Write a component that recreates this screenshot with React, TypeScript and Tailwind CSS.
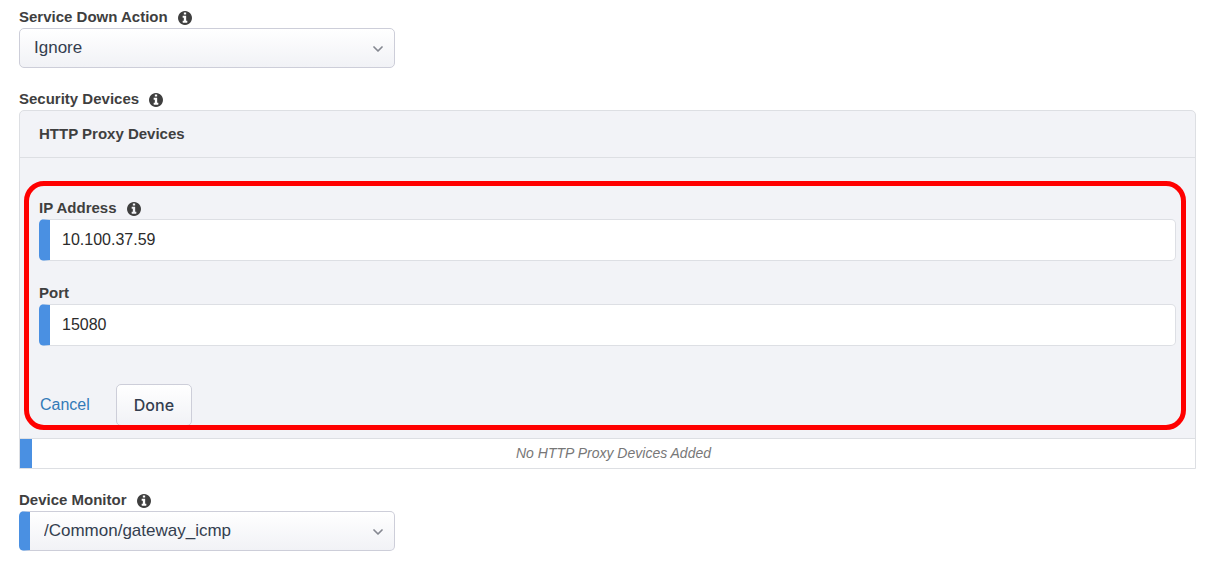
import { useState, type ReactNode } from "react";

function InfoIcon() {
  return (
    <svg viewBox="0 128 1536 1536" aria-hidden="true" className="size-3.5 text-[#3f3f3f]" fill="currentColor">
      <path d="M1024 1376v-160q0-14-9-23t-23-9h-96v-512q0-14-9-23t-23-9h-320q-14 0-23 9t-9 23v160q0 14 9 23t23 9h96v320h-96q-14 0-23 9t-9 23v160q0 14 9 23t23 9h448q14 0 23-9t9-23zm-128-896v-160q0-14-9-23t-23-9h-192q-14 0-23 9t-9 23v160q0 14 9 23t23 9h192q14 0 23-9t9-23zm640 416q0 209-103 385.5t-279.5 279.5-385.5 103-385.5-103-279.5-279.5-103-385.5 103-385.5 279.5-279.5 385.5-103 385.5 103 279.5 279.5 103 385.5z" />
    </svg>
  );
}

type LabelProps = { htmlFor?: string; id?: string; info?: boolean; children: ReactNode };

function FieldLabel({ htmlFor, id, info, children }: LabelProps) {
  const text = "text-[15px] font-bold text-[#3f3f3f]";
  return (
    <div className="flex h-[21px] items-center gap-2.5">
      {htmlFor ? (
        <label htmlFor={htmlFor} className={text}>{children}</label>
      ) : (
        <span id={id} className={text}>{children}</span>
      )}
      {info && <InfoIcon />}
    </div>
  );
}

type SelectProps = { id: string; options: string[]; required?: boolean };

function SelectBox({ id, options, required }: SelectProps) {
  return (
    <div className="relative max-w-[376px]">
      <select
        id={id}
        className={
          "block h-10 w-full appearance-none rounded-[5px] border border-[#cdced9] bg-linear-to-b from-white to-[#f1f2f6] pr-10 pl-3.5 text-[17px] text-[#343e4f] " +
          (required ? "border-l-[11px] border-l-[#4a90e2]" : "")
        }
      >
        {options.map((option) => (
          <option key={option}>{option}</option>
        ))}
      </select>
      <svg
        viewBox="0 0 10 6"
        aria-hidden="true"
        className="pointer-events-none absolute top-[18px] right-3 h-1.5 w-2.5"
        fill="none"
        stroke="#858891"
        strokeWidth="1.7"
        strokeLinecap="round"
        strokeLinejoin="round"
      >
        <path d="M1 1l4 4 4-4" />
      </svg>
    </div>
  );
}

type TextFieldProps = {
  id: string;
  label: string;
  info?: boolean;
  value: string;
  onChange: (value: string) => void;
};

function TextField({ id, label, info, value, onChange }: TextFieldProps) {
  return (
    <div>
      <FieldLabel htmlFor={id} info={info}>{label}</FieldLabel>
      <input
        id={id}
        type="text"
        value={value}
        onChange={(event) => onChange(event.target.value)}
        className="block h-[42px] w-full rounded-[5px] border border-l-[11px] border-[#dddfe4] border-l-[#4a90e2] bg-white px-3 text-base text-[#2b2b2b]"
      />
    </div>
  );
}

export default function App() {
  const [address, setAddress] = useState("10.100.37.59");
  const [port, setPort] = useState("15080");

  return (
    <main className="flex flex-col gap-[21px] bg-white pt-[7px] pr-[22px] pb-4 pl-[19px] font-['Liberation_Sans',Arial,sans-serif]">
      <div>
        <FieldLabel htmlFor="service-down-action" info>Service Down Action</FieldLabel>
        <SelectBox id="service-down-action" options={["Ignore", "Reset", "Drop"]} />
      </div>

      <section aria-labelledby="security-devices">
        <FieldLabel id="security-devices" info>Security Devices</FieldLabel>
        <div className="rounded-t-[5px] border border-[#dddfe3] bg-[#f2f3f7]">
          <h2 className="flex h-[47px] items-center border-b border-[#dddfe3] px-[19px] text-[15px] font-bold text-[#3f3f3f]">
            HTTP Proxy Devices
          </h2>

          <form
            className="relative px-[19px] pt-10 pb-3"
            onSubmit={(event) => event.preventDefault()}
          >
            <div className="flex flex-col gap-[22px]">
              <TextField id="ip-address" label="IP Address" info value={address} onChange={setAddress} />
              <TextField id="port" label="Port" value={port} onChange={setPort} />
            </div>
            <div className="mt-[38px] flex items-center gap-[25px]">
              <button type="button" className="h-[42px] px-px text-base text-[#337ab7]">
                Cancel
              </button>
              <button
                type="submit"
                className="h-[42px] rounded-[5px] border border-[#cdced9] bg-linear-to-b from-white to-[#f1f2f6] px-[17px] font-[Inter,sans-serif] text-base font-medium text-[#343e4f]"
              >
                Done
              </button>
            </div>
            <div
              aria-hidden="true"
              className="pointer-events-none absolute top-[23px] right-[9px] bottom-2 left-1 rounded-[20px] border-5 border-[#ff0000]"
            />
          </form>

          <div className="flex h-[30px] border-t border-[#dddfe3] bg-white">
            <div className="w-3 bg-[#4a90e2]" />
            <p className="flex-1 pt-1 text-center text-sm text-[#777777] italic">
              No HTTP Proxy Devices Added
            </p>
          </div>
        </div>
      </section>

      <div>
        <FieldLabel htmlFor="device-monitor" info>Device Monitor</FieldLabel>
        <SelectBox id="device-monitor" options={["/Common/gateway_icmp"]} required />
      </div>
    </main>
  );
}
